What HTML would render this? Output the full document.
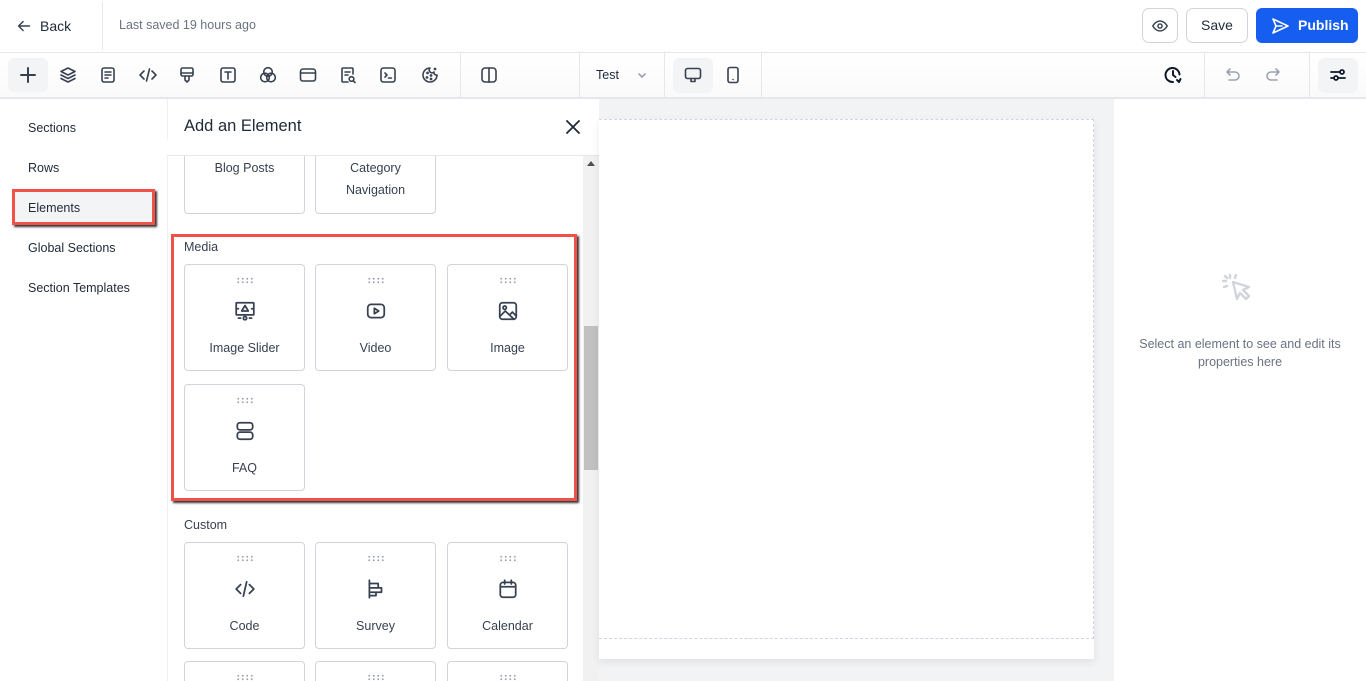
<!DOCTYPE html>
<html><head><meta charset="utf-8"><style>
*{box-sizing:border-box;margin:0;padding:0}
html,body{width:1366px;height:681px;overflow:hidden}
body{background:#fff;font-family:"Liberation Sans",sans-serif;color:#374151;position:relative}
.a{position:absolute}
svg{display:block}
.ic{position:absolute;width:20px;height:20px;fill:none;stroke:#374151;stroke-width:1.6;stroke-linecap:round;stroke-linejoin:round}
.card{position:absolute;width:121px;height:107px;border:1px solid #d1d5db;border-radius:4px;background:#fff;text-align:center;font-size:12.5px;color:#374151}
.card .dots{position:absolute;left:51px;top:12px;width:18px;height:7px;background-image:radial-gradient(circle,#9ca3af 0.9px,transparent 1.1px);background-size:4.5px 3.5px}
.card .lb{position:absolute;left:0;right:0;top:76px}
.card svg{position:absolute;left:49px;top:35px;width:22px;height:22px}
.nav{position:absolute;left:28px;font-size:12.5px;color:#1f2937}
</style></head><body>
<div class="a" style="left:0;top:0;width:1366px;height:53px;border-bottom:1px solid #e5e7eb"></div>
<svg class="ic" style="left:15px;top:17px;width:18px;height:18px" viewBox="0 0 20 20"><path d="M16 10H4M9 5l-5 5 5 5"/></svg>
<div class="a" style="left:40px;top:18px;font-size:14px;color:#1f2937">Back</div>
<div class="a" style="left:102px;top:2px;width:1px;height:48px;background:#e5e7eb"></div>
<div class="a" style="left:119px;top:18px;font-size:12.5px;color:#6b7280">Last saved 19 hours ago</div>
<div class="a" style="left:1142px;top:8px;width:36px;height:35px;border:1px solid #d1d5db;border-radius:7px"></div>
<svg class="ic" style="left:1151px;top:17px;width:18px;height:18px" viewBox="0 0 20 20"><path d="M2 10s3-5.5 8-5.5 8 5.5 8 5.5-3 5.5-8 5.5S2 10 2 10z"/><circle cx="10" cy="10" r="2.3"/></svg>
<div class="a" style="left:1186px;top:8px;width:62px;height:35px;border:1px solid #d1d5db;border-radius:7px;font-size:14px;text-align:center;line-height:33px;color:#1f2937">Save</div>
<div class="a" style="left:1256px;top:8px;width:102px;height:35px;background:#155eef;border-radius:6px;color:#fff;font-size:14px;font-weight:bold;line-height:35px;padding-left:42px">Publish</div>
<svg class="ic" style="left:1270px;top:16px;stroke:#fff" viewBox="0 0 20 20"><path d="M3 3l15 7-15 7 3-7-3-7zM6 10h6"/></svg>
<div class="a" style="left:0;top:53px;width:1366px;height:46px;border-bottom:2px solid #e5e7eb;background:linear-gradient(#fff,#fafafa)"></div>
<div class="a" style="left:8px;top:58px;width:40px;height:34px;background:#f3f4f6;border-radius:6px"></div>
<svg class="ic" style="left:18px;top:65px" viewBox="0 0 20 20"><path d="M10 3v14M3 10h14" stroke-width="2"/></svg>
<svg class="ic" style="left:58px;top:65px" viewBox="0 0 20 20"><path d="M10 3l7 3.5-7 3.5-7-3.5z M3 10l7 3.5 7-3.5M3 13.5l7 3.5 7-3.5"/></svg>
<svg class="ic" style="left:98px;top:65px" viewBox="0 0 20 20"><rect x="4" y="3" width="12" height="14" rx="2"/><path d="M7 7h6M7 10h6M7 13h3"/></svg>
<svg class="ic" style="left:138px;top:65px" viewBox="0 0 20 20"><path d="M6 6l-4 4 4 4M14 6l4 4-4 4M11.5 4l-3 12"/></svg>
<svg class="ic" style="left:177px;top:65px" viewBox="0 0 20 20"><rect x="4" y="3" width="12" height="8" rx="1.5"/><path d="M4 8h12M8 11v4l2 2 2-2v-4"/></svg>
<svg class="ic" style="left:218px;top:65px" viewBox="0 0 20 20"><rect x="3" y="3" width="14" height="14" rx="2"/><path d="M7 7h6M10 7v7"/></svg>
<svg class="ic" style="left:258px;top:65px" viewBox="0 0 20 20"><circle cx="10" cy="7" r="4.3"/><circle cx="7" cy="12.5" r="4.3"/><circle cx="13" cy="12.5" r="4.3"/></svg>
<svg class="ic" style="left:298px;top:65px" viewBox="0 0 20 20"><rect x="2.5" y="4" width="15" height="12" rx="2.5"/><path d="M2.5 8h15"/></svg>
<svg class="ic" style="left:338px;top:65px" viewBox="0 0 20 20"><path d="M10 17H5a1 1 0 01-1-1V4a1 1 0 011-1h9a1 1 0 011 1v5M7 7h5M7 10h3"/><circle cx="13.5" cy="14" r="2.3"/><path d="M15.3 15.8l1.7 1.7"/></svg>
<svg class="ic" style="left:378px;top:65px" viewBox="0 0 20 20"><rect x="3" y="3" width="14" height="14" rx="2.5"/><path d="M7 8l2 2-2 2M10.5 13h3"/></svg>
<svg class="ic" style="left:420px;top:65px" viewBox="0 0 20 20"><path d="M10 3a7 7 0 107 7 2.5 2.5 0 01-3-3 2.5 2.5 0 01-4-4z"/><circle cx="7.5" cy="8" r=".6"/><circle cx="7" cy="12.5" r=".6"/><circle cx="11" cy="14" r=".6"/><circle cx="11" cy="10.5" r=".6"/><circle cx="15" cy="4" r=".6"/></svg>
<div class="a" style="left:460px;top:53px;width:1px;height:45px;background:#e5e7eb"></div>
<svg class="ic" style="left:479px;top:65px" viewBox="0 0 20 20"><rect x="3" y="3" width="14" height="14" rx="3"/><path d="M10 3v14"/></svg>
<div class="a" style="left:579px;top:53px;width:1px;height:45px;background:#e5e7eb"></div>
<div class="a" style="left:596px;top:68px;font-size:12.5px;color:#1f2937">Test</div>
<svg class="ic" style="left:637px;top:70px;width:10px;height:10px;stroke:#9ca3af" viewBox="0 0 10 10"><path d="M2 4l3 3 3-3"/></svg>
<div class="a" style="left:664px;top:53px;width:1px;height:45px;background:#e5e7eb"></div>
<div class="a" style="left:673px;top:58px;width:40px;height:35px;background:#f3f4f6;border-radius:6px"></div>
<svg class="ic" style="left:683px;top:65px" viewBox="0 0 20 20"><rect x="2.5" y="3.5" width="15" height="10" rx="2"/><path d="M8 13.5v3h4v-3"/></svg>
<svg class="ic" style="left:723px;top:65px" viewBox="0 0 20 20"><rect x="5" y="2.5" width="10" height="15" rx="2"/><path d="M10 14.5h.01"/></svg>
<div class="a" style="left:761px;top:53px;width:1px;height:45px;background:#e5e7eb"></div>
<svg class="ic" style="left:1163px;top:65px;stroke:#111827;stroke-width:2" viewBox="0 0 20 20"><path d="M16.5 9.5A7 7 0 1010 17M10 6v4l2.5 2M14 15l2 2 1.5-3"/></svg>
<div class="a" style="left:1204px;top:53px;width:1px;height:45px;background:#e5e7eb"></div>
<svg class="ic" style="left:1223px;top:65px;stroke:#9ca3af" viewBox="0 0 20 20"><path d="M7 4L4 7l3 3M4 7h8a4 4 0 010 8H6"/></svg>
<svg class="ic" style="left:1263px;top:65px;stroke:#9ca3af" viewBox="0 0 20 20"><path d="M13 4l3 3-3 3M16 7H8a4 4 0 000 8h6"/></svg>
<div class="a" style="left:1309px;top:53px;width:1px;height:45px;background:#e5e7eb"></div>
<div class="a" style="left:1318px;top:58px;width:40px;height:35px;background:#f3f4f6;border-radius:7px"></div>
<svg class="ic" style="left:1328px;top:65px;stroke:#111827;stroke-width:1.8" viewBox="0 0 20 20"><path d="M3 7h9M3 13h3"/><circle cx="14" cy="7" r="2"/><circle cx="8" cy="13" r="2"/><path d="M10 13h7"/></svg>
<div class="nav" style="top:121px">Sections</div>
<div class="nav" style="top:161px">Rows</div>
<div class="a" style="left:12px;top:189px;width:143px;height:36px;background:#f3f4f6;border:3px solid #f0524a;box-shadow:2px 2px 2px #333"></div>
<div class="nav" style="top:201px">Elements</div>
<div class="nav" style="top:241px">Global Sections</div>
<div class="nav" style="top:281px">Section Templates</div>
<div class="a" style="left:167px;top:99px;width:432px;height:582px;background:#fff;border-left:1px solid #f0f0f0"></div>
<div class="a" style="left:184px;top:117px;font-size:16.5px;color:#1f2937">Add an Element</div>
<svg class="ic" style="left:563px;top:117px;stroke:#1f2937;stroke-width:1.8" viewBox="0 0 20 20"><path d="M4 4l12 12M16 4L4 16"/></svg>
<div class="a" style="left:583px;top:156px;width:16px;height:525px;background:#f1f1f1"></div>
<div class="a" style="left:587px;top:161px;width:0;height:0;border-left:4px solid transparent;border-right:4px solid transparent;border-bottom:5px solid #505050"></div>
<div class="a" style="left:584px;top:326px;width:14px;height:144px;background:#c1c1c1"></div>
<div class="card" style="left:184px;top:140px;height:74px"><div class="lb" style="top:20px">Blog Posts</div></div>
<div class="card" style="left:315px;top:140px;height:74px"><div class="lb" style="top:16px;line-height:22px">Category<br>Navigation</div></div>
<div class="a" style="left:167px;top:140px;width:416px;height:16px;background:#fff"></div>
<div class="a" style="left:167px;top:155px;width:432px;height:1px;background:#e5e7eb"></div>
<div class="a" style="left:184px;top:240px;font-size:12.5px;color:#374151">Media</div>
<div class="card" style="left:184px;top:264px"><div class="dots"></div><svg class="ic" viewBox="0 0 20 20"><rect x="2" y="2.5" width="16" height="11" rx=".5"/><path d="M10 5l3 5H7z M4 8l-1 0M16 8h1"/><circle cx="10" cy="16.5" r="1.5"/><path d="M4 16.5h2M14 16.5h2"/></svg><div class="lb">Image Slider</div></div>
<div class="card" style="left:315px;top:264px"><div class="dots"></div><svg class="ic" viewBox="0 0 20 20"><rect x="2.5" y="4" width="15" height="12" rx="3"/><path d="M8.5 7.5v5l4-2.5z"/></svg><div class="lb">Video</div></div>
<div class="card" style="left:447px;top:264px"><div class="dots"></div><svg class="ic" viewBox="0 0 20 20"><rect x="2.5" y="2.5" width="15" height="15" rx="2.5"/><circle cx="7" cy="7" r="1.5"/><path d="M2.5 15l5-5 8 7.5M12 13l2-2 3.5 3.5"/></svg><div class="lb">Image</div></div>
<div class="card" style="left:184px;top:384px"><div class="dots"></div><svg class="ic" viewBox="0 0 20 20"><rect x="3" y="2.5" width="14" height="6.5" rx="2.5"/><rect x="3" y="11" width="14" height="6.5" rx="2.5"/></svg><div class="lb">FAQ</div></div>
<div class="a" style="left:171px;top:234px;width:406px;height:267px;border:3px solid #f0524a;box-shadow:2px 2px 2px #333"></div>
<div class="a" style="left:184px;top:518px;font-size:12.5px;color:#374151">Custom</div>
<div class="card" style="left:184px;top:542px"><div class="dots"></div><svg class="ic" viewBox="0 0 20 20"><path d="M6 6l-4 4 4 4M14 6l4 4-4 4M11.5 3.5l-3 13"/></svg><div class="lb">Code</div></div>
<div class="card" style="left:315px;top:542px"><div class="dots"></div><svg class="ic" viewBox="0 0 20 20"><path d="M4 2v16M4 5h8v4H4M4 9h11v4H4M4 13h6v3H4"/></svg><div class="lb">Survey</div></div>
<div class="card" style="left:447px;top:542px"><div class="dots"></div><svg class="ic" viewBox="0 0 20 20"><rect x="3" y="4" width="14" height="13.5" rx="2.5"/><path d="M3 8h14M7 2v3.5M13 2v3.5"/></svg><div class="lb">Calendar</div></div>
<div class="card" style="left:184px;top:661px;height:20px;border-bottom:none;border-radius:4px 4px 0 0"><div class="dots"></div></div>
<div class="card" style="left:315px;top:661px;height:20px;border-bottom:none;border-radius:4px 4px 0 0"><div class="dots"></div></div>
<div class="card" style="left:447px;top:661px;height:20px;border-bottom:none;border-radius:4px 4px 0 0"><div class="dots"></div></div>
<div class="a" style="left:599px;top:99px;width:515px;height:582px;background:#f2f3f5"></div>
<div class="a" style="left:599px;top:119px;width:495px;height:540px;background:#fff;box-shadow:0 3px 8px rgba(0,0,0,.08)"></div>
<div class="a" style="left:599px;top:119px;width:495px;height:520px;border-top:1px dashed #d1d5e6;border-right:1px dashed #d1d5e6;border-bottom:1px dashed #d1d5e6"></div>
<div class="a" style="left:1114px;top:99px;width:252px;height:582px;background:#fff"></div>
<svg class="ic" style="left:1220px;top:272px;width:40px;height:40px;stroke:#d1d5db;stroke-width:2.4" viewBox="0 0 40 40"><path d="M13 10l4 17 3-6 6 6 3-3-6-6 6-3z M10 3v3M3 9h3M5 4l2 2M16 3l-1 3M4 15l3-1"/></svg>
<div class="a" style="left:1114px;top:335px;width:252px;text-align:center;font-size:12.5px;color:#6b7280;line-height:18px">Select an element to see and edit its<br>properties here</div>
</body></html>
